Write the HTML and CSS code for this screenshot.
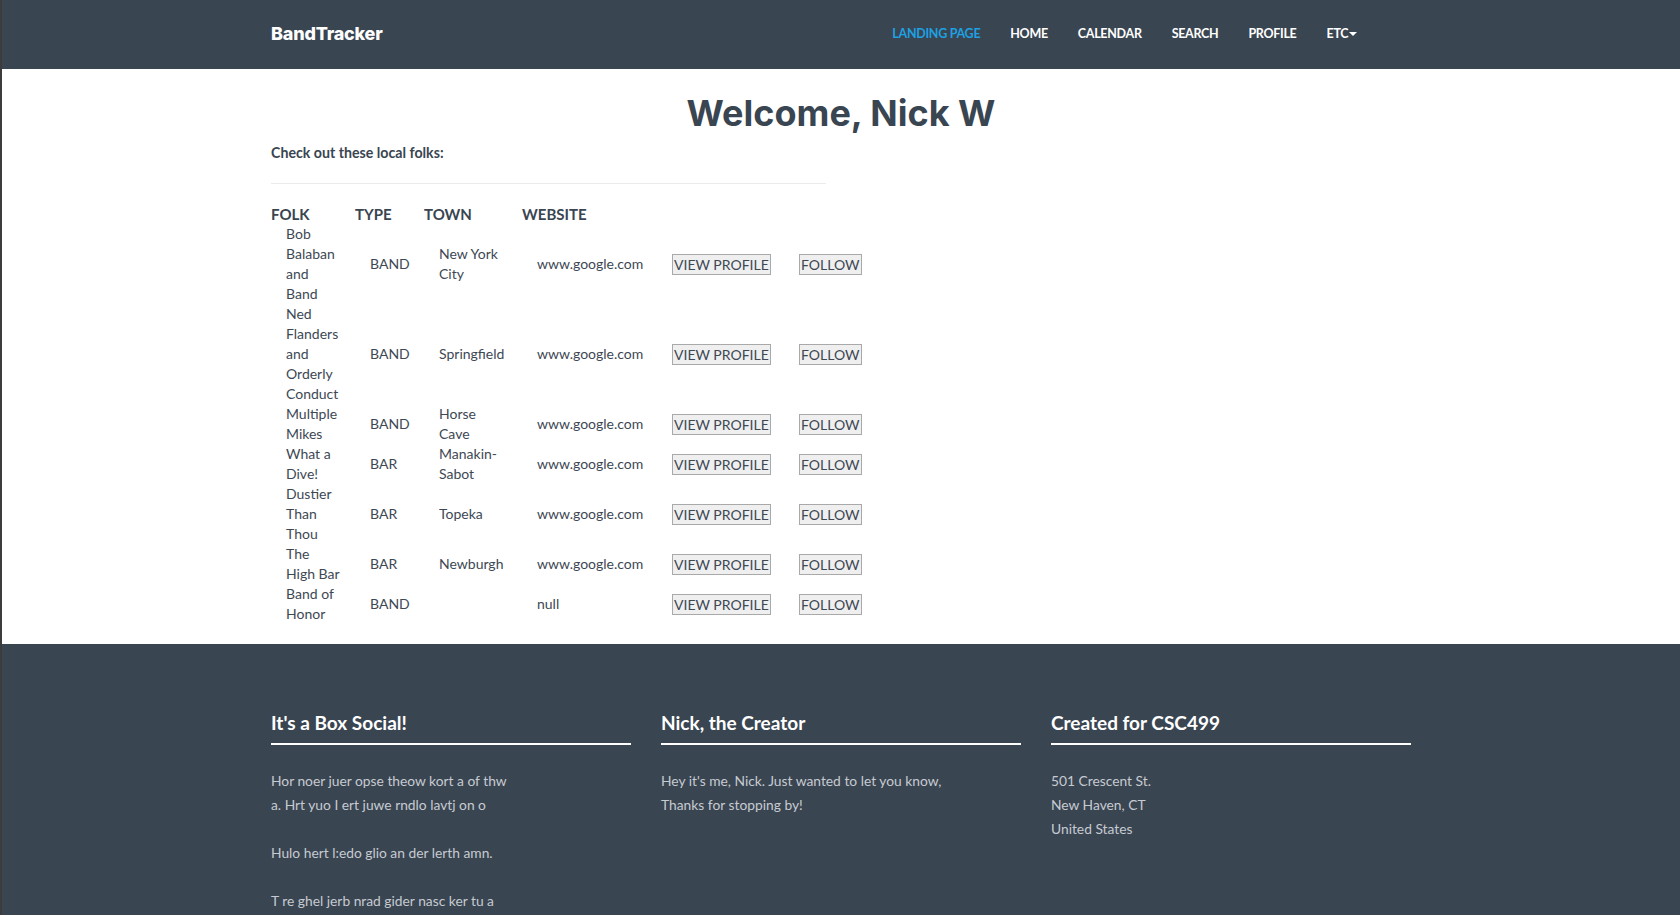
FILE: index.html
```html
<!DOCTYPE html>
<html lang="en">
<head>
<meta charset="utf-8">
<title>BandTracker</title>
<link rel="stylesheet" href="styles.css">
</head>
<body>
<nav class="navbar">
  <div class="container nav-inner">
    <a class="brand" href="#">BandTracker</a>
    <ul class="nav-links">
      <li><a class="active" href="#">LANDING PAGE</a></li>
      <li><a href="#">HOME</a></li>
      <li><a href="#">CALENDAR</a></li>
      <li><a href="#">SEARCH</a></li>
      <li><a href="#">PROFILE</a></li>
      <li><a href="#">ETC <span class="caret"></span></a></li>
    </ul>
  </div>
</nav>

<main class="container main">
  <h1 class="welcome">Welcome, Nick W</h1>
  <div class="half">
    <h4 class="subtitle">Check out these local folks:</h4>
    <hr class="rule">
    <table class="folks">
      <colgroup>
        <col class="c-folk"><col class="c-type"><col class="c-town"><col class="c-web"><col class="c-view"><col class="c-follow">
      </colgroup>
      <thead>
        <tr><th>FOLK</th><th>TYPE</th><th>TOWN</th><th>WEBSITE</th><th></th><th></th></tr>
      </thead>
      <tbody>
        <tr><td>Bob Balaban and Band</td><td>BAND</td><td>New York City</td><td>www.google.com</td><td><button class="btn">VIEW PROFILE</button></td><td><button class="btn">FOLLOW</button></td></tr>
        <tr><td>Ned Flanders and Orderly Conduct</td><td>BAND</td><td>Springfield</td><td>www.google.com</td><td><button class="btn">VIEW PROFILE</button></td><td><button class="btn">FOLLOW</button></td></tr>
        <tr><td>Multiple Mikes</td><td>BAND</td><td>Horse Cave</td><td>www.google.com</td><td><button class="btn">VIEW PROFILE</button></td><td><button class="btn">FOLLOW</button></td></tr>
        <tr><td>What a Dive!</td><td>BAR</td><td>Manakin-Sabot</td><td>www.google.com</td><td><button class="btn">VIEW PROFILE</button></td><td><button class="btn">FOLLOW</button></td></tr>
        <tr><td>Dustier Than Thou</td><td>BAR</td><td>Topeka</td><td>www.google.com</td><td><button class="btn">VIEW PROFILE</button></td><td><button class="btn">FOLLOW</button></td></tr>
        <tr><td>The High Bar</td><td>BAR</td><td>Newburgh</td><td>www.google.com</td><td><button class="btn">VIEW PROFILE</button></td><td><button class="btn">FOLLOW</button></td></tr>
        <tr><td>Band of Honor</td><td>BAND</td><td></td><td>null</td><td><button class="btn">VIEW PROFILE</button></td><td><button class="btn">FOLLOW</button></td></tr>
      </tbody>
    </table>
  </div>
</main>

<footer class="footer">
  <div class="container footer-grid">
    <section class="fcol">
      <h3 class="fhead">It's a Box Social!</h3>
      <p class="ftext">Hor noer juer opse theow kort a of thw<br>a. Hrt yuo I ert juwe rndlo lavtj on o</p>
      <p class="ftext">Hulo hert l:edo glio an der lerth amn.</p>
      <p class="ftext">T re ghel jerb nrad gider nasc ker tu a</p>
    </section>
    <section class="fcol">
      <h3 class="fhead">Nick, the Creator</h3>
      <p class="ftext">Hey it's me, Nick. Just wanted to let you know,<br>Thanks for stopping by!</p>
    </section>
    <section class="fcol">
      <h3 class="fhead">Created for CSC499</h3>
      <p class="ftext">501 Crescent St.<br>New Haven, CT<br>United States</p>
    </section>
  </div>
</footer>
</body>
</html>
```

FILE: styles.css
```css
html, body {
  margin: 0;
  padding: 0;
}

body {
  border-left: 2px solid #3c3c3c;
  font-family: Lato, "Liberation Sans", sans-serif;
  color: #394551;
  background: #ffffff;
}

.container {
  width: 1140px;
  margin: 0 auto;
}

/* Navbar */
.navbar {
  background: #3a4552;
  height: 69px;
}

.nav-inner {
  display: flex;
  align-items: center;
  height: 66px;
}

.brand {
  font-family: Inter, Lato, sans-serif;
  font-weight: 800;
  font-size: 18px;
  letter-spacing: -0.2px;
  color: #ffffff;
  text-decoration: none;
}

.nav-links {
  display: flex;
  list-style: none;
  margin: 0 39px 0 auto;
  padding: 0;
}

.nav-links a {
  display: block;
  padding: 0 15px;
  font-size: 12.5px;
  font-weight: 700;
  color: #ffffff;
  text-decoration: none;
  letter-spacing: -0.3px;
}

.nav-links a.active {
  color: #1da1e2;
}

.caret {
  display: inline-block;
  width: 0;
  height: 0;
  border-top: 4px solid #ffffff;
  border-left: 4px solid transparent;
  border-right: 4px solid transparent;
  vertical-align: middle;
  margin-left: -2px;
}

/* Main */
.welcome {
  margin: 24px 0 0;
  text-align: center;
  font-family: Inter, "Open Sans", sans-serif;
  font-weight: 700;
  font-size: 36px;
  line-height: 40px;
  color: #394551;
}

.half {
  width: 555px;
}

.subtitle {
  margin: 10px 0 0;
  font-size: 14.2px;
  font-weight: 700;
  line-height: 20px;
}

.rule {
  margin: 20px 0;
  border: 0;
  border-top: 1px solid #ebebeb;
}

.folks {
  border-collapse: collapse;
  table-layout: fixed;
  width: 602px;
  margin-bottom: 20px;
}

.c-folk { width: 84px; }
.c-type { width: 69px; }
.c-town { width: 98px; }
.c-web { width: 135px; }
.c-view { width: 127px; }
.c-follow { width: 89px; }

.folks th {
  text-align: left;
  padding: 0;
  font-size: 15px;
  line-height: 20px;
  font-weight: 700;
  color: #394551;
}

.folks td {
  padding: 0 15px;
  font-size: 14px;
  line-height: 20px;
  vertical-align: middle;
  color: #3d4854;
}

.btn {
  font-family: Lato, "Liberation Sans", sans-serif;
  font-size: 14px;
  line-height: 19px;
  padding: 0 1px;
  border: 1px solid #a9a9a9;
  border-radius: 0;
  background: #efefef;
  color: #3d4854;
  white-space: nowrap;
  cursor: pointer;
}

/* Footer */
.footer {
  background: #3a4552;
  padding: 67px 0 60px;
}

.footer-grid {
  display: grid;
  grid-template-columns: repeat(3, 360px);
  column-gap: 30px;
}

.fhead {
  margin: 0;
  font-size: 19px;
  line-height: 24px;
  font-weight: 700;
  color: #ffffff;
  padding-bottom: 8px;
  border-bottom: 2px solid #ffffff;
}

.ftext {
  margin: 24px 0 0;
  font-size: 13.8px;
  line-height: 24px;
  color: #c6cbd1;
}
```
